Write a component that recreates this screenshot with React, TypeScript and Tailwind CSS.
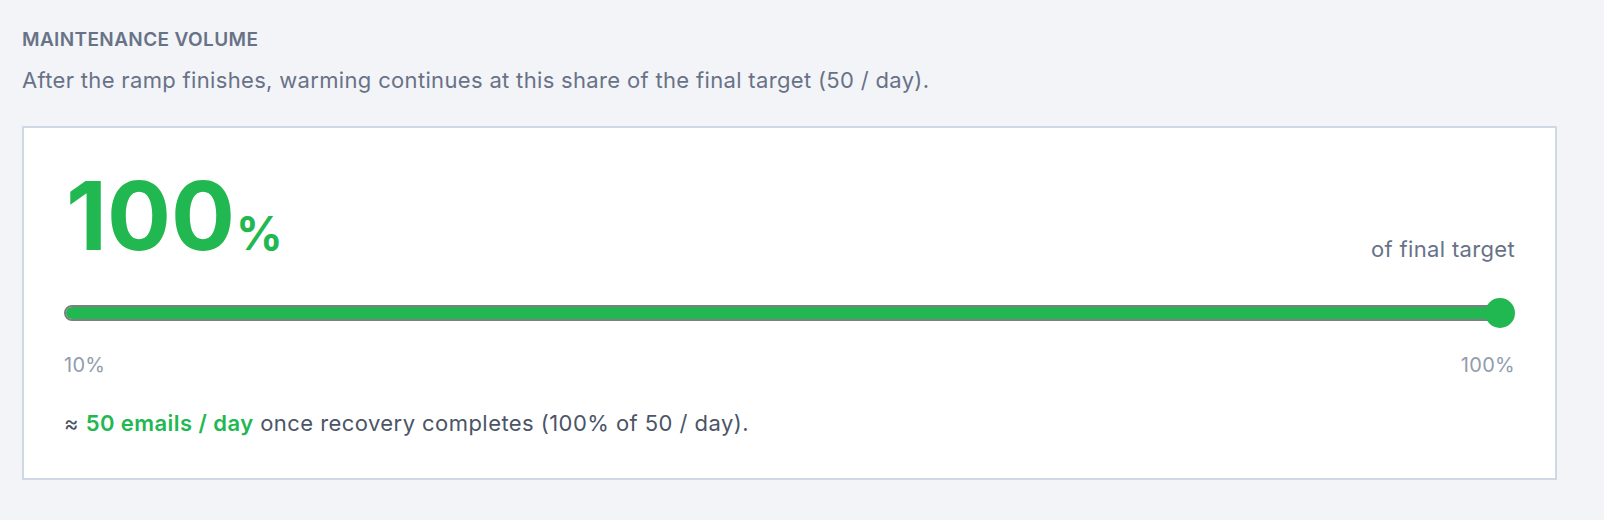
export default function App() {
  const pct = 100;
  const fill = ((pct - 10) / 90) * 100;
  return (
    <div
      className="min-h-[520px] w-full bg-[#f3f4f8] pl-[22px] pt-[25px]"
      style={{ fontFamily: 'Inter, "Noto Sans", sans-serif' }}
    >
      <h2 className="text-[19px] font-semibold uppercase leading-[30px] tracking-[0.02em] text-[#687287]">
        Maintenance Volume
      </h2>
      <p className="mt-[10px] text-[22px] leading-[30px] tracking-[0.015em] text-[#687287]">
        After the ramp finishes, warming continues at this share of the final target (50 / day).
      </p>

      <div className="mt-[31px] w-[1535px] border-2 border-[#cfd8e5] bg-white px-10 pb-10 pt-[50px]">
        <div className="flex items-end justify-between">
          <div className="ml-[2px] flex items-baseline font-bold text-[#22b851]">
            <span className="text-[95px] leading-[76px]">100</span>
            <span className="ml-[1px] text-[46px] leading-none">%</span>
          </div>
          <span className="mb-[-8px] text-[22px] leading-[30px] tracking-[0.015em] text-[#687287]">
            of final target
          </span>
        </div>

        {/* range track with fill and thumb */}
        <div className="relative mt-[42px] h-[30px]">
          <div className="absolute left-0 right-[15px] top-[7px] h-[16px] rounded-full border-2 border-[#7d7d84] bg-[#e5e7eb]">
            <div className="h-full rounded-full bg-[#22b851]" style={{ width: `${fill}%` }} />
          </div>
          <div
            className="absolute top-0 h-[30px] w-[30px] -translate-x-full rounded-full bg-[#22b851]"
            style={{ left: `${fill}%` }}
          />
        </div>

        <div className="mt-[22px] flex justify-between text-[20px] leading-[30px] tracking-[0.015em] text-[#929cae]">
          <span>10%</span>
          <span>100%</span>
        </div>

        <p className="mt-[28px] text-[22px] leading-[30px] tracking-[0.02em] text-[#4b5567]">
          ≈ <span className="font-semibold text-[#22b851]">50 emails / day</span> once recovery completes (100% of 50 / day).
        </p>
      </div>
    </div>
  );
}
